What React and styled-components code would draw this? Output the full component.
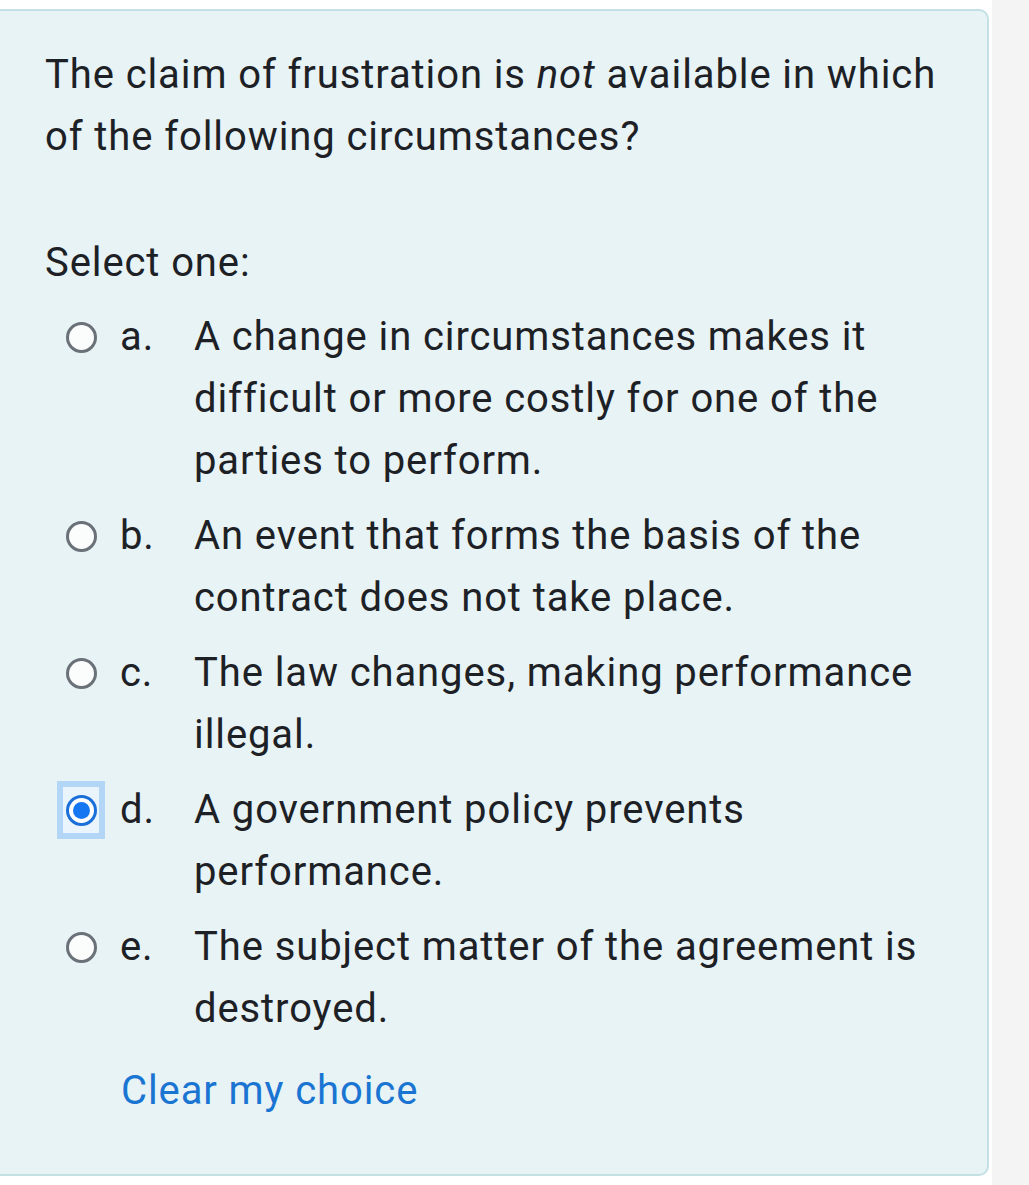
import React from "react";
import styled, { createGlobalStyle } from "styled-components";

const Global = createGlobalStyle`
  html, body { margin: 0; padding: 0; background: #ffffff; }
  body { font-family: Roboto, "Liberation Sans", Arial, sans-serif; color: #1d2125; }
`;

const Page = styled.div`
  display: flex;
  width: 1029px;
  min-height: 1185px;
`;

const Main = styled.div`
  width: 992px;
  background: #ffffff;
  overflow: hidden;
`;

const Aside = styled.div`
  flex: 1;
  background: #f4f4f4;
`;

const Card = styled.div`
  margin: 9px 0 0 -12px;
  width: 1001px;
  box-sizing: border-box;
  background: #e7f3f5;
  border: 2px solid #c3e0e5;
  border-radius: 10px;
  padding: 33px 40px 52px 55px;
  font-size: 40px;
  line-height: 62px;
  letter-spacing: 0.9px;
`;

const Question = styled.div`
  margin: 0 0 64px 0;
  width: 905px;
`;

const Prompt = styled.div`
  margin-bottom: 12px;
`;

const Options = styled.div`
  display: flex;
  flex-direction: column;
  gap: 13px;
`;

const Option = styled.div`
  display: grid;
  grid-template-columns: 75px 74px 1fr;
  align-items: start;
`;

const RadioCell = styled.div`
  height: 62px;
  display: flex;
  align-items: center;
  justify-content: flex-start;
  padding-left: ${p => (p.focused ? "12px" : "21px")};
`;

const Focus = styled.div`
  width: 36px;
  height: 46px;
  border: 6px solid #b3d6f6;
  background: #e9f4fc;
  display: flex;
  align-items: center;
  justify-content: center;
`;

const Radio = styled.span`
  width: 31px;
  height: 31px;
  box-sizing: border-box;
  border-radius: 50%;
  border: 3px solid ${p => (p.checked ? "#1a6fd8" : "#6a7178")};
  background: ${p => (p.checked ? "#ffffff" : "#fbfcfc")};
  display: flex;
  align-items: center;
  justify-content: center;
  &::after {
    content: "";
    display: ${p => (p.checked ? "block" : "none")};
    width: 17px;
    height: 17px;
    border-radius: 50%;
    background: #1677f2;
  }
`;

const Letter = styled.div``;

const Text = styled.div`
  width: 760px;
`;

const Clear = styled.a`
  display: inline-block;
  margin: 20px 0 0 76px;
  color: #1a75d2;
  text-decoration: none;
`;

const options = [
  { l: "a.", t: "A change in circumstances makes it difficult or more costly for one of the parties to perform." },
  { l: "b.", t: "An event that forms the basis of the contract does not take place." },
  { l: "c.", t: "The law changes, making performance illegal." },
  { l: "d.", t: "A government policy prevents performance.", checked: true },
  { l: "e.", t: "The subject matter of the agreement is destroyed." },
];

export default function App() {
  return (
    <Page>
      <Global />
      <Main>
        <Card>
          <Question>
            The claim of frustration is <em>not</em> available in which of the following circumstances?
          </Question>
          <Prompt>Select one:</Prompt>
          <Options>
            {options.map(o => (
              <Option key={o.l}>
                <RadioCell focused={o.checked}>
                  {o.checked ? (
                    <Focus>
                      <Radio checked />
                    </Focus>
                  ) : (
                    <Radio />
                  )}
                </RadioCell>
                <Letter>{o.l}</Letter>
                <Text>{o.t}</Text>
              </Option>
            ))}
          </Options>
          <Clear href="#">Clear my choice</Clear>
        </Card>
      </Main>
      <Aside />
    </Page>
  );
}
